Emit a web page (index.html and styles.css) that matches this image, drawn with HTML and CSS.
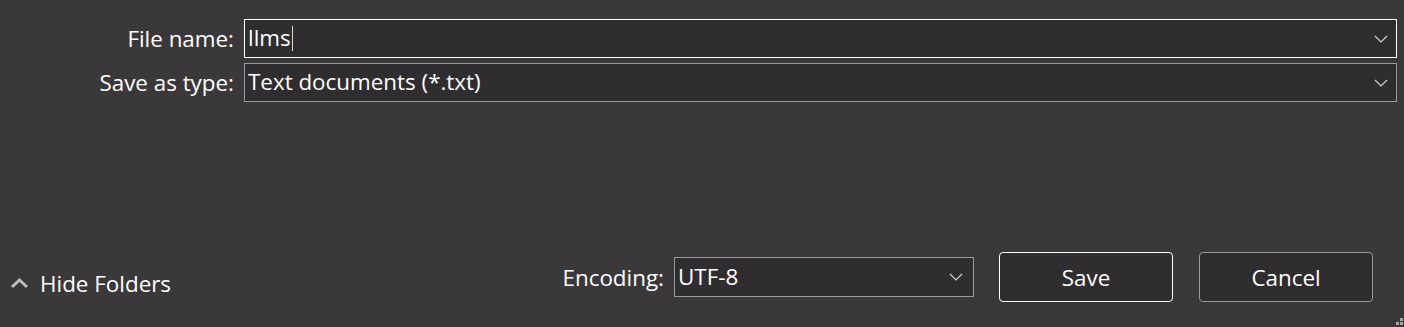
FILE: index.html
```html
<!DOCTYPE html>
<html>
<head>
<meta charset="utf-8">
<link rel="stylesheet" href="styles.css">
</head>
<body>
<div class="dialog">
  <div class="fields">
    <label class="label">File name:</label>
    <div class="box box-focus">
      <span class="value">llms</span><span class="caret"></span>
      <svg class="chev" width="14" height="8" viewBox="0 0 14 8"><path d="M1 1 L7 7 L13 1" fill="none" stroke="#d0d0d0" stroke-width="1.2"/></svg>
    </div>
    <label class="label">Save as type:</label>
    <div class="box">
      <span class="value">Text documents (*.txt)</span>
      <svg class="chev" width="14" height="8" viewBox="0 0 14 8"><path d="M1 1 L7 7 L13 1" fill="none" stroke="#d0d0d0" stroke-width="1.2"/></svg>
    </div>
  </div>
  <div class="bottom">
    <div class="hide">
      <svg class="up" width="19" height="12" viewBox="0 0 19 12"><path d="M2 10 L9.5 3 L17 10" fill="none" stroke="#bdbdbd" stroke-width="3"/></svg>
      <span>Hide Folders</span>
    </div>
    <div class="enc">
      <span class="enc-label">Encoding:</span>
      <div class="box enc-box">
        <span class="value">UTF-8</span>
        <svg class="chev" width="14" height="8" viewBox="0 0 14 8"><path d="M1 1 L7 7 L13 1" fill="none" stroke="#d0d0d0" stroke-width="1.2"/></svg>
      </div>
    </div>
    <button class="btn btn-primary">Save</button>
    <button class="btn">Cancel</button>
    <div class="grip">
      <i class="d d1"></i><i class="d d2"></i><i class="d d3"></i>
    </div>
  </div>
</div>
</body>
</html>
```

FILE: styles.css
```css
html, body {
  margin: 0;
  padding: 0;
}
body {
  width: 1404px;
  height: 327px;
  background: #3a383b;
  font-family: "Open Sans", "Noto Sans", sans-serif;
  font-size: 22.4px;
  color: #ffffff;
  overflow: hidden;
}
.dialog {
  position: relative;
  height: 327px;
  display: flex;
  flex-direction: column;
}
.fields {
  display: grid;
  grid-template-columns: 244px 1153px;
  row-gap: 5px;
  padding-top: 19px;
}
.label {
  text-align: right;
  padding-right: 10px;
  line-height: 39px;
  height: 39px;
}
.box {
  box-sizing: border-box;
  height: 39px;
  border: 1px solid #9a999b;
  background: #2f2d30;
  display: flex;
  align-items: center;
  padding-left: 3px;
  padding-right: 8px;
}
.box-focus {
  border: 1.5px solid #ffffff;
}
.value {
  line-height: 1;
}
.caret {
  display: inline-block;
  width: 1px;
  height: 25px;
  background: #d8d8d8;
  margin-left: 1px;
}
.chev {
  margin-left: auto;
}
.bottom {
  margin-top: 150px;
  display: flex;
  align-items: center;
  height: 50px;
  padding-right: 31px;
}
.hide {
  display: flex;
  align-items: center;
  padding-left: 10px;
  margin-right: auto;
  margin-top: 12px;
}
.hide span {
  margin-left: 11px;
}
.up {
  display: block;
}
.enc {
  display: flex;
  align-items: center;
}
.enc-label {
  margin-right: 10px;
}
.enc-box {
  width: 300px;
  height: 40px;
  padding-left: 3px;
  padding-right: 10px;
}
.btn {
  box-sizing: border-box;
  width: 174px;
  height: 50px;
  border: 1px solid #9a999b;
  border-radius: 4px;
  background: #2f2d30;
  color: #ffffff;
  font-family: inherit;
  font-size: 22.4px;
  padding: 0;
  margin-left: 26px;
}
.btn-primary {
  border: 1px solid #ffffff;
  margin-left: 25px;
}
.grip {
  position: absolute;
  right: 0;
  bottom: 0;
  width: 10px;
  height: 10px;
}
.d {
  position: absolute;
  width: 3px;
  height: 3px;
  background: #a8a8a8;
}
.d1 { right: 1px; top: 1px; }
.d2 { right: 1px; top: 5px; }
.d3 { right: 5px; top: 5px; }
```
